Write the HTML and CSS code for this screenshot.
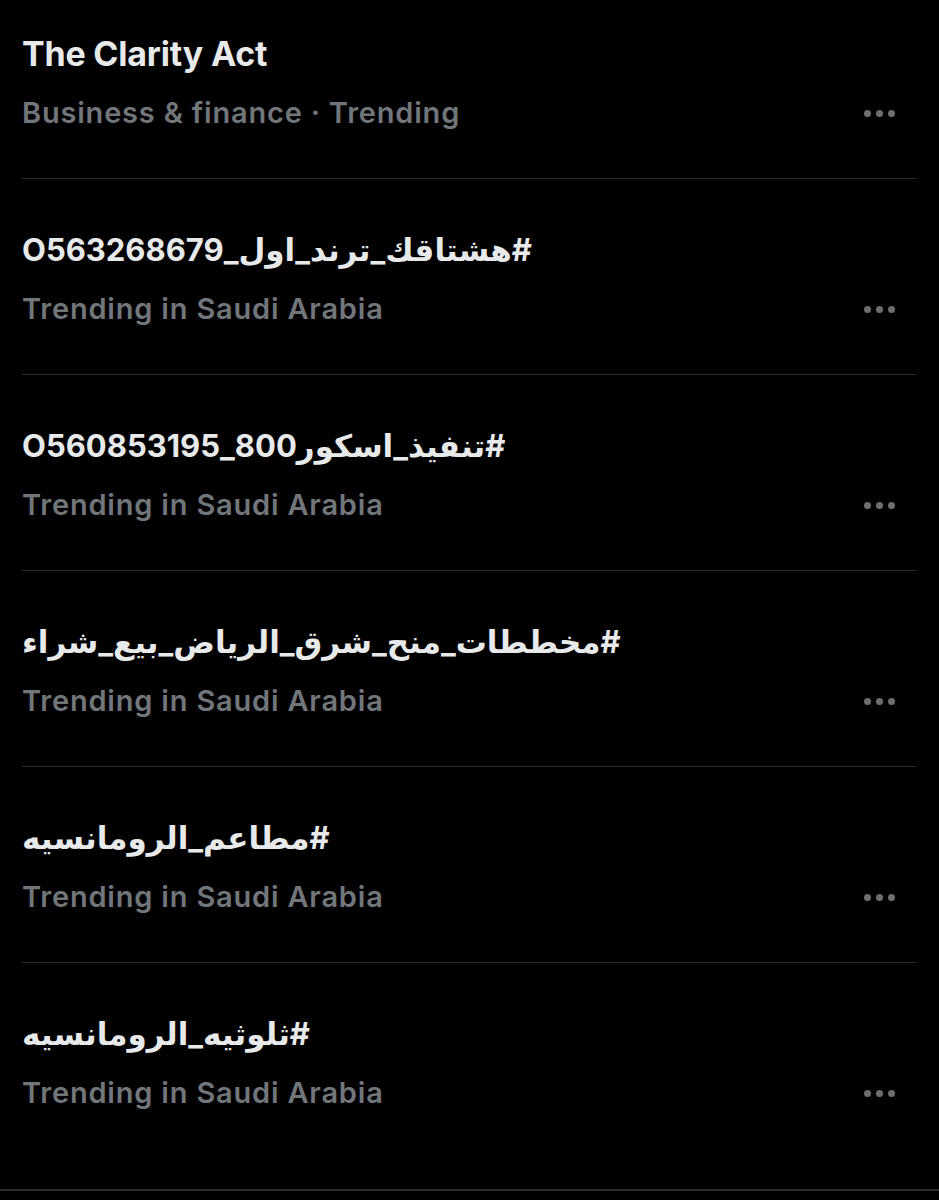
FILE: index.html
```html
<!DOCTYPE html>
<html lang="en">
<head>
    <meta charset="UTF-8">
    <meta name="viewport" content="width=device-width, initial-scale=1.0">
    <title>Trending</title>
    <link rel="stylesheet" href="styles.css">
</head>
<body>

<section class="trends">
    <div class="trend">
        <div class="trend-text">
            <div class="trend-name latin">The Clarity Act</div>
            <div class="trend-meta">Business &amp; finance · Trending</div>
        </div>
        <span class="more"><i></i><i></i><i></i></span>
    </div>

    <div class="trend">
        <div class="trend-text">
            <div class="trend-name" dir="rtl">#هشتاقك_ترند_اول_O563268679</div>
            <div class="trend-meta">Trending in Saudi Arabia</div>
        </div>
        <span class="more"><i></i><i></i><i></i></span>
    </div>

    <div class="trend">
        <div class="trend-text">
            <div class="trend-name" dir="rtl">#تنفيذ_اسكور800_O560853195</div>
            <div class="trend-meta">Trending in Saudi Arabia</div>
        </div>
        <span class="more"><i></i><i></i><i></i></span>
    </div>

    <div class="trend">
        <div class="trend-text">
            <div class="trend-name" dir="rtl">#مخططات_منح_شرق_الرياض_بيع_شراء</div>
            <div class="trend-meta">Trending in Saudi Arabia</div>
        </div>
        <span class="more"><i></i><i></i><i></i></span>
    </div>

    <div class="trend">
        <div class="trend-text">
            <div class="trend-name" dir="rtl">#مطاعم_الرومانسيه</div>
            <div class="trend-meta">Trending in Saudi Arabia</div>
        </div>
        <span class="more"><i></i><i></i><i></i></span>
    </div>

    <div class="trend">
        <div class="trend-text">
            <div class="trend-name" dir="rtl">#ثلوثيه_الرومانسيه</div>
            <div class="trend-meta">Trending in Saudi Arabia</div>
        </div>
        <span class="more"><i></i><i></i><i></i></span>
    </div>
</section>

</body>
</html>
```

FILE: styles.css
```css
body {
    margin: 0;
    padding: 0;
    background-color: #000;
    font-family: Inter, "DejaVu Sans", sans-serif;
    overflow: hidden;
}
.trends {
    margin-top: -17px;
    border-bottom: 2px solid #2f2f2f;
}
.trend {
    margin: 0 22px;
    height: 196px;
    box-sizing: border-box;
    padding-top: 51px;
    display: flex;
    justify-content: space-between;
    border-bottom: 1px solid #2a2d30;
}
.trend:last-child {
    border-bottom: none;
    height: 226px;
}
.trend-name {
    color: #e7e9ea;
    font-size: 31px;
    font-weight: 700;
    line-height: 40px;
    text-align: left;
}
.trend-name.latin {
    font-size: 34px;
    letter-spacing: -0.2px;
}
.trend-meta {
    color: #71767b;
    font-size: 29px;
    font-weight: 600;
    letter-spacing: 0.8px;
    line-height: 36px;
    margin-top: 21px;
}
.more {
    display: flex;
    gap: 5px;
    align-self: flex-start;
    margin-top: 76px;
    margin-right: 22px;
}
.more i {
    width: 7px;
    height: 7px;
    border-radius: 50%;
    background-color: #6e6e6e;
}
```
